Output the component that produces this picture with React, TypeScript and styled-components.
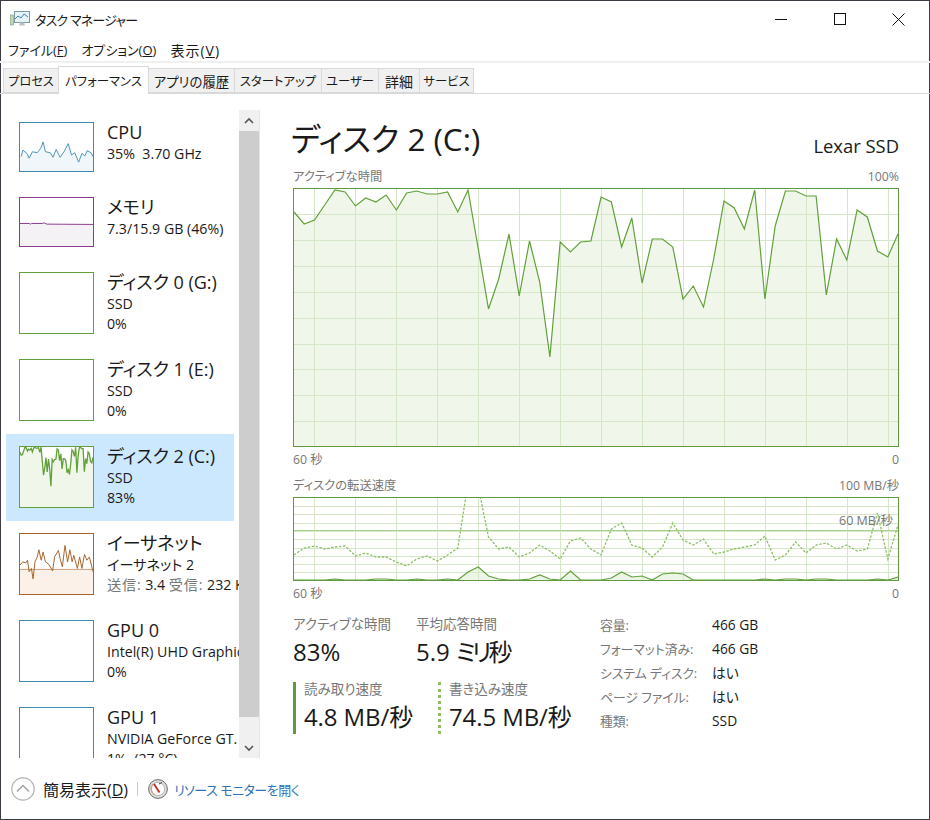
import React from 'react';
import styled, { createGlobalStyle } from 'styled-components';

const GlobalStyle = createGlobalStyle`
  html, body {
    margin: 0;
    padding: 0;
    background: #fff;
  }
  body {
    font-family: 'Open Sans', 'Noto Sans CJK JP', sans-serif;
    font-feature-settings: 'palt';
    color: #1a1a1a;
  }
`;

const Window = styled.div`
  width: 930px;
  height: 820px;
  display: flex;
  flex-direction: column;
  box-sizing: border-box;
  box-shadow: inset 0 0 0 1px #3c3c44;
  overflow: hidden;
`;

const TitleBar = styled.div`
  height: 38px;
  display: flex;
  align-items: center;
  padding-left: 10px;
`;

const TitleText = styled.span`
  margin-left: 5px;
  flex: 1;
  font-size: 13px;
  letter-spacing: -0.8px;
`;

const WinButton = styled.div`
  width: 59px;
  height: 38px;
  display: flex;
  align-items: center;
  justify-content: center;
`;

const Controls = styled.div`
  display: flex;
  margin-right: 2px;
`;

const MenuBar = styled.div`
  height: 23px;
  display: flex;
  align-items: center;
  padding-left: 8px;
  gap: 14px;
  font-size: 13px;
  border-bottom: 2px solid #f0f0f0;
`;

const MenuItem = styled.span<{ $kanji?: boolean }>`
  white-space: nowrap;
  ${p => p.$kanji && 'font-size: 14px; letter-spacing: 1px;'}
`;

const TabBar = styled.div`
  height: 31px;
  box-sizing: border-box;
  display: flex;
  align-items: flex-end;
  padding-left: 4px;
  border-bottom: 1px solid #d9d9d9;
`;

const Tab = styled.div<{ $width: number; $size: number; $active?: boolean }>`
  width: ${p => p.$width}px;
  height: ${p => (p.$active ? 28 : 25)}px;
  box-sizing: border-box;
  display: flex;
  align-items: center;
  justify-content: center;
  font-size: ${p => p.$size}px;
  white-space: nowrap;
  background: ${p => (p.$active ? '#fff' : '#f0f0f0')};
  border: 1px solid #d9d9d9;
  border-bottom: ${p => (p.$active ? 'none' : '1px solid #d9d9d9')};
  margin-bottom: ${p => (p.$active ? -1 : 0)}px;
  margin-left: -1px;
`;

const Main = styled.div`
  flex: 1;
  display: flex;
  min-height: 0;
`;

const Sidebar = styled.div`
  width: 260px;
  box-sizing: border-box;
  padding: 16px 0 0 6px;
  display: flex;
`;

const DeviceList = styled.div`
  width: 233px;
  overflow: hidden;
`;

const Device = styled.div<{ $active?: boolean }>`
  width: 228px;
  box-sizing: border-box;
  padding: 12px 0 13px 13px;
  display: flex;
  gap: 13px;
  background: ${p => (p.$active ? '#cce8ff' : 'transparent')};
`;

const Thumb = styled.div<{ $color: string; $tall?: boolean }>`
  width: 75px;
  height: ${p => (p.$tall ? 62 : 50)}px;
  flex: none;
  box-sizing: border-box;
  border: 1px solid ${p => p.$color};
  background: #fff;

  svg {
    display: block;
    width: 100%;
    height: 100%;
  }
`;

const DeviceInfo = styled.div`
  white-space: pre;
  font-size: 14.2px;
  line-height: 20px;
  margin-top: -2px;
`;

const DeviceName = styled.div`
  font-size: 18px;
  line-height: 24px;
`;

const Muted = styled.span`
  color: #777;
  letter-spacing: 0.8px;
`;

const Scrollbar = styled.div`
  width: 20px;
  display: flex;
  flex-direction: column;
  background: #f0f0f0;
  border-right: 1px solid #e6e6e6;
`;

const ScrollArrow = styled.div<{ $down?: boolean }>`
  height: ${p => (p.$down ? 41 : 21)}px;
  display: flex;
  align-items: ${p => (p.$down ? 'flex-end' : 'center')};
  justify-content: center;
  padding-bottom: ${p => (p.$down ? 6 : 0)}px;
  box-sizing: border-box;
`;

const ScrollThumb = styled.div`
  flex: 1;
  background: #cdcdcd;
`;

const Content = styled.div`
  flex: 1;
  box-sizing: border-box;
  padding: 26px 31px 0 33px;
  display: flex;
  flex-direction: column;
`;

const Header = styled.div`
  height: 44px;
  display: flex;
  justify-content: space-between;
  align-items: center;
`;

const Heading = styled.div`
  font-size: 31.5px;
  white-space: nowrap;
  margin: 0 0 10px -2px;
`;

const Model = styled.div`
  font-size: 18.4px;
  margin-top: 6px;
`;

const LabelRow = styled.div<{ $axis?: boolean }>`
  display: flex;
  justify-content: space-between;
  align-items: center;
  box-sizing: border-box;
  font-size: 12.3px;
  color: #777;
  height: ${p => (p.$axis ? 26 : 18)}px;
  padding-bottom: ${p => (p.$axis ? 2 : 0)}px;
  margin-top: ${p => (p.$axis ? 0 : 3)}px;
  margin-bottom: ${p => (p.$axis ? 0 : 3)}px;
`;

const Chart = styled.div<{ $height: number }>`
  position: relative;
  height: ${p => p.$height}px;
  box-sizing: border-box;
  border: 1px solid #5f9a3f;

  svg {
    display: block;
    width: 100%;
    height: 100%;
  }
`;

const ChartNote = styled.span`
  position: absolute;
  right: 5px;
  top: 12px;
  font-size: 12.5px;
  color: #777;
`;

const Stats = styled.div`
  display: flex;
  padding-top: 5px;
`;

const StatColumn = styled.div`
  width: 307px;
  padding-top: 2px;
`;

const StatRow = styled.div`
  display: flex;
`;

const Stat = styled.div<{ $width: number }>`
  width: ${p => p.$width}px;
`;

const StatLabel = styled.div`
  font-size: 13.5px;
  line-height: 20px;
  color: #777;
  white-space: nowrap;
`;

const StatValue = styled.div`
  font-size: 24px;
  line-height: 36px;
  white-space: nowrap;
`;

const NarrowKana = styled.span`
  letter-spacing: -4px;
  margin-right: 1px;
`;

const Rate = styled.div<{ $dotted?: boolean; $width: number }>`
  width: ${p => p.$width}px;
  height: 52px;
  box-sizing: border-box;
  margin-top: 12px;
  padding-left: 8px;
  border-left: 3px ${p => (p.$dotted ? 'dotted #8cc063' : 'solid #5f9a3f')};
  ${StatLabel} {
    line-height: 15px;
  }
  ${StatValue} {
    line-height: 40px;
    letter-spacing: -0.1px;
  }
`;

const Specs = styled.div`
  display: grid;
  grid-template-columns: 112px auto;
  grid-auto-rows: 24px;
  align-items: center;
  font-size: 13.8px;
`;

const SpecKey = styled.div`
  color: #777;
  font-size: 12.8px;
  white-space: nowrap;
`;

const Footer = styled.div`
  height: 62px;
  display: flex;
  align-items: center;
  padding-left: 11px;
`;

const Collapse = styled.div`
  font-size: 16px;
  margin-left: 8px;
  white-space: nowrap;
`;

const Divider = styled.div`
  width: 1px;
  height: 14px;
  background: #c8c8c8;
  margin: 0 10px 0 9px;
`;

const MonitorLink = styled.a`
  font-size: 13px;
  letter-spacing: -0.5px;
  color: #2f74b5;
  margin-left: 6px;
  white-space: nowrap;
`;

const activeTime = [
  23, 35, 31, 16, 1, 3, 17, 9, 13, 6, 21, 4, 2, 5, 5, 3, 23, 1, 60, 120, 90, 45, 107, 52, 93, 168,
  53, 63, 53, 52, 8, 13, 58, 29, 94, 50, 50, 58, 110, 97, 118, 70, 12, 19, 40, 1, 110, 37, 2, 2, 7,
  7, 106, 50, 71, 21, 28, 62, 68, 45,
];

const writeRate = [
  57, 50, 48, 51, 49, 48, 58, 55, 59, 59, 64, 68, 61, 58, 63, 57, 50, -15, -11, 39, 51, 49, 59, 55,
  47, 53, 61, 43, 40, 51, 57, 31, 25, 47, 50, 59, 49, 25, 42, 47, 41, 56, 54, 51, 49, 47, 38, 62,
  57, 44, 55, 47, 45, 51, 47, 53, 51, 15, 61, 27,
];

const readRate = [
  82, 82, 82, 82, 81, 82, 82, 82, 81, 81, 82, 82, 81, 82, 82, 81, 82, 74, 69, 78, 81, 82, 82, 81,
  77, 81, 82, 73, 82, 82, 82, 80, 74, 79, 78, 82, 76, 75, 76, 82, 82, 82, 82, 82, 82, 82, 81, 82,
  81, 81, 82, 81, 81, 82, 82, 82, 82, 81, 82, 79,
];

const cpuLine =
  '3,103 9,83 21,93 28,108 38,88 53,91 63,78 71,58 78,88 93,91 101,105 111,81 123,105 135,88 148,63 158,98 168,91 180,120 190,93 199,101 206,85 218,91 224,103';
const ethernetLine =
  '0,95 8,85 18,88 23,80 28,115 35,105 40,137 46,85 53,70 58,48 65,80 71,55 78,85 86,90 93,100 100,113 106,70 118,50 123,75 130,100 138,35 146,85 153,48 160,85 165,65 176,105 183,70 190,105 198,62 205,80 213,70 224,115';
const memoryLine = '0,78 28,78 32,80 36,78 68,78 74,76 82,80 224,81';

const toPoints = (data: number[], width: number) =>
  data.map((y, i) => `${((i * width) / 59).toFixed(1)},${y}`).join(' ');

const areaOf = (data: number[], width: number, height: number) =>
  `0,${height} ${toPoints(data, width)} ${width},${height}`;

const range = (count: number, start: number, step: number) =>
  Array.from({ length: count }, (_, i) => start + i * step);

const Grid = ({ width, height, rows, step }: { width: number; height: number; rows: number[]; step: number }) => (
  <g stroke="#d5e6c9" strokeWidth="1">
    {rows.map(y => (
      <line key={`h${y}`} x1="0" x2={width} y1={Math.round(y) + 0.5} y2={Math.round(y) + 0.5} />
    ))}
    {range(15, 20, step).map(x => (
      <line key={`v${x}`} x1={x + 0.5} x2={x + 0.5} y1="0" y2={height} />
    ))}
  </g>
);

const ActiveChart = () => (
  <svg viewBox="0 0 604 257">
    <polygon points={areaOf(activeTime, 604, 257)} fill="#f0f7ea" />
    <Grid width={604} height={257} rows={range(9, 25, 25.9)} step={41} />
    <polyline points={toPoints(activeTime, 604)} fill="none" stroke="#62a03a" strokeWidth="1.2" />
  </svg>
);

const TransferChart = () => (
  <svg viewBox="0 0 604 82">
    <polygon points={areaOf(readRate, 604, 82)} fill="#edf6e6" />
    <Grid width={604} height={82} rows={range(9, 8, 8.3)} step={41} />
    <line x1="0" x2="604" y1="32.5" y2="32.5" stroke="#a9d18f" strokeWidth="1" />
    <polyline points={toPoints(writeRate, 604)} fill="none" stroke="#8cc063" strokeWidth="1.3" strokeDasharray="2.5 1.5" />
    <polyline points={toPoints(readRate, 604)} fill="none" stroke="#62a03a" strokeWidth="1.2" />
  </svg>
);

const thumbs: Record<string, React.ReactNode> = {
  cpu: (
    <svg viewBox="0 0 224 147" preserveAspectRatio="none">
      <polygon points={`0,147 ${cpuLine} 224,147`} fill="#f1f6fa" />
      <polyline points={cpuLine} fill="none" stroke="#4a94b8" strokeWidth="3" />
    </svg>
  ),
  memory: (
    <svg viewBox="0 0 224 147" preserveAspectRatio="none">
      <polygon points={`0,147 ${memoryLine} 224,147`} fill="#f4f2f4" />
      <polyline points={memoryLine} fill="none" stroke="#8b3a8f" strokeWidth="3" />
    </svg>
  ),
  disk: (
    <svg viewBox="0 0 604 257" preserveAspectRatio="none">
      <polygon points={areaOf(activeTime, 604, 257)} fill="#f0f7ea" />
      <polyline points={toPoints(activeTime, 604)} fill="none" stroke="#62a03a" strokeWidth="1.3" vectorEffect="non-scaling-stroke" />
    </svg>
  ),
  ethernet: (
    <svg viewBox="0 0 224 183" preserveAspectRatio="none">
      <rect x="0" y="108" width="224" height="75" fill="#fbf1e8" />
      <line x1="0" x2="224" y1="108" y2="108" stroke="#b5703a" strokeWidth="2" />
      <polyline points={ethernetLine} fill="none" stroke="#a7642c" strokeWidth="3" />
    </svg>
  ),
};

const devices = [
  { name: 'CPU', color: '#3d8bb0', thumb: 'cpu', lines: ['35%  3.70 GHz'] },
  { name: 'メモリ', color: '#8b3a8f', thumb: 'memory', lines: ['7.3/15.9 GB (46%)'] },
  { name: 'ディスク 0 (G:)', color: '#62a03a', tall: true, lines: ['SSD', '0%'] },
  { name: 'ディスク 1 (E:)', color: '#62a03a', tall: true, lines: ['SSD', '0%'] },
  { name: 'ディスク 2 (C:)', color: '#62a03a', tall: true, thumb: 'disk', active: true, lines: ['SSD', '83%'] },
  { name: 'イーサネット', color: '#a7642c', tall: true, thumb: 'ethernet', lines: ['イーサネット 2'], net: true },
  { name: 'GPU 0', color: '#3d8bb0', tall: true, lines: ['Intel(R) UHD Graphics 630', '0%'] },
  { name: 'GPU 1', color: '#3d8bb0', tall: true, lines: ['NVIDIA GeForce GT. ', '1%  (27 °C)'] },
];

const tabs = [
  { label: 'プロセス', width: 56, size: 12.2 },
  { label: 'パフォーマンス', width: 91, size: 12.4, active: true },
  { label: 'アプリの履歴', width: 87, size: 13.4 },
  { label: 'スタートアップ', width: 88, size: 12.4 },
  { label: 'ユーザー', width: 58, size: 12.4 },
  { label: '詳細', width: 42, size: 14 },
  { label: 'サービス', width: 55, size: 12.4 },
];

const specs = [
  ['容量:', '466 GB'],
  ['フォーマット済み:', '466 GB'],
  ['システム ディスク:', 'はい'],
  ['ページ ファイル:', 'はい'],
  ['種類:', 'SSD'],
];

const AppIcon = () => (
  <svg width="20" height="18" viewBox="0 0 20 18">
    <rect x="0.5" y="5" width="3" height="10" fill="#bcd9b4" stroke="#7d9a80" strokeWidth="0.6" />
    <rect x="4.5" y="1.5" width="15" height="11" fill="#e6f2f8" stroke="#7f99a8" />
    <polyline points="5,9 8,6 11,8 14,4 18,7" fill="none" stroke="#3a86b0" strokeWidth="1" />
    <path d="M10 12.5h4l1 3H9z" fill="#b8c2c8" />
  </svg>
);

const Chevron = ({ down, size = 10 }: { down?: boolean; size?: number }) => (
  <svg width={size} height={size * 0.7} viewBox="0 0 10 7">
    <polyline points={down ? '1,1 5,5 9,1' : '1,6 5,2 9,6'} fill="none" stroke="#555" strokeWidth="1.6" />
  </svg>
);

const CollapseIcon = () => (
  <svg width="24" height="24" viewBox="0 0 24 24">
    <circle cx="12" cy="12" r="11.2" fill="#fff" stroke="#b4b4b4" strokeWidth="1.2" />
    <polyline points="6,14.5 12,8.5 18,14.5" fill="none" stroke="#a0a0a0" strokeWidth="1.4" />
  </svg>
);

const GaugeIcon = () => (
  <svg width="20" height="20" viewBox="0 0 20 20">
    <circle cx="10" cy="10" r="9.4" fill="#dcdcdc" stroke="#6e6e6e" strokeWidth="1" />
    <circle cx="10" cy="10" r="6.6" fill="#fff" stroke="#a8a8a8" strokeWidth="0.8" />
    <path d="M4.8 5.2A7 7 0 0 0 7 16" fill="none" stroke="#c9a27a" strokeWidth="1.2" />
    <line x1="6" y1="5" x2="11.5" y2="13.5" stroke="#c2281e" strokeWidth="1.8" />
    <line x1="11" y1="5" x2="14" y2="3.5" stroke="#444" strokeWidth="1" />
  </svg>
);

export default function App() {
  return (
    <>
      <GlobalStyle />
      <Window>
        <TitleBar>
          <AppIcon />
          <TitleText>タスク マネージャー</TitleText>
          <Controls>
            <WinButton>
              <svg width="12" height="12" viewBox="0 0 12 12">
                <line x1="0" x2="12" y1="6.5" y2="6.5" stroke="#111" />
              </svg>
            </WinButton>
            <WinButton>
              <svg width="12" height="12" viewBox="0 0 12 12">
                <rect x="0.5" y="0.5" width="11" height="11" fill="none" stroke="#111" />
              </svg>
            </WinButton>
            <WinButton>
              <svg width="13" height="13" viewBox="0 0 13 13">
                <path d="M0.5 0.5l12 12M12.5 0.5l-12 12" stroke="#111" fill="none" />
              </svg>
            </WinButton>
          </Controls>
        </TitleBar>
        <MenuBar>
          <MenuItem>ファイル(<u>F</u>)</MenuItem>
          <MenuItem>オプション(<u>O</u>)</MenuItem>
          <MenuItem $kanji>表示(<u>V</u>)</MenuItem>
        </MenuBar>
        <TabBar>
          {tabs.map(t => (
            <Tab key={t.label} $width={t.width} $size={t.size} $active={t.active}>
              {t.label}
            </Tab>
          ))}
        </TabBar>
        <Main>
          <Sidebar>
            <DeviceList>
              {devices.map(d => (
                <Device key={d.name} $active={d.active}>
                  <Thumb $color={d.color} $tall={d.tall}>
                    {d.thumb && thumbs[d.thumb]}
                  </Thumb>
                  <DeviceInfo>
                    <DeviceName>{d.name}</DeviceName>
                    {d.lines.map(line => (
                      <div key={line}>{line}</div>
                    ))}
                    {d.net && (
                      <div>
                        <Muted>送信:</Muted> 3.4 <Muted>受信:</Muted> 232 Kbps
                      </div>
                    )}
                  </DeviceInfo>
                </Device>
              ))}
            </DeviceList>
            <Scrollbar>
              <ScrollArrow>
                <Chevron />
              </ScrollArrow>
              <ScrollThumb />
              <ScrollArrow $down>
                <Chevron down />
              </ScrollArrow>
            </Scrollbar>
          </Sidebar>
          <Content>
            <Header>
              <Heading>ディスク 2 (C:)</Heading>
              <Model>Lexar SSD</Model>
            </Header>
            <LabelRow>
              <span>アクティブな時間</span>
              <span>100%</span>
            </LabelRow>
            <Chart $height={259}>
              <ActiveChart />
            </Chart>
            <LabelRow $axis>
              <span>60 秒</span>
              <span>0</span>
            </LabelRow>
            <LabelRow>
              <span>ディスクの転送速度</span>
              <span>100 MB/秒</span>
            </LabelRow>
            <Chart $height={84}>
              <TransferChart />
              <ChartNote>60 MB/秒</ChartNote>
            </Chart>
            <LabelRow $axis>
              <span>60 秒</span>
              <span>0</span>
            </LabelRow>
            <Stats>
              <StatColumn>
                <StatRow>
                  <Stat $width={123}>
                    <StatLabel>アクティブな時間</StatLabel>
                    <StatValue>83%</StatValue>
                  </Stat>
                  <Stat $width={150}>
                    <StatLabel>平均応答時間</StatLabel>
                    <StatValue>
                      5.9 <NarrowKana>ミリ</NarrowKana>秒
                    </StatValue>
                  </Stat>
                </StatRow>
                <StatRow>
                  <Rate $width={145}>
                    <StatLabel>読み取り速度</StatLabel>
                    <StatValue>4.8 MB/秒</StatValue>
                  </Rate>
                  <Rate $width={150} $dotted>
                    <StatLabel>書き込み速度</StatLabel>
                    <StatValue>74.5 MB/秒</StatValue>
                  </Rate>
                </StatRow>
              </StatColumn>
              <Specs>
                {specs.map(([key, value]) => (
                  <React.Fragment key={key}>
                    <SpecKey>{key}</SpecKey>
                    <div>{value}</div>
                  </React.Fragment>
                ))}
              </Specs>
            </Stats>
          </Content>
        </Main>
        <Footer>
          <CollapseIcon />
          <Collapse>
            簡易表示(<u>D</u>)
          </Collapse>
          <Divider />
          <GaugeIcon />
          <MonitorLink>リソース モニターを開く</MonitorLink>
        </Footer>
      </Window>
    </>
  );
}
